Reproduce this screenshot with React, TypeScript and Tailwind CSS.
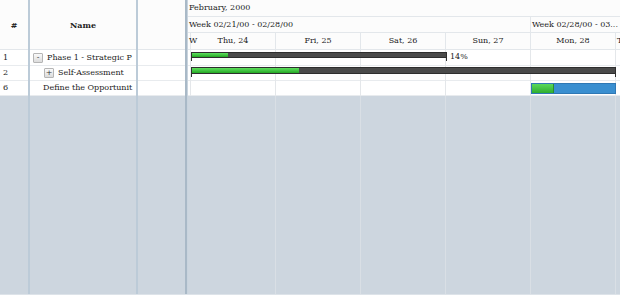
import React from "react";

const F = { fontFamily: '"DejaVu Serif", serif' };

const days = ["Thu, 24", "Fri, 25", "Sat, 26", "Sun, 27", "Mon, 28"];

function DayLines({ white }: { white: boolean }) {
  return (
    <div className="flex h-full">
      <div className={`w-[3px] shrink-0 ${white ? "border-r border-[#e4e7ea]" : ""}`} />
      {days.map((d) => (
        <div key={d} className={`w-[85px] shrink-0 border-r ${white ? "border-[#e4e7ea]" : "border-[#d9dfe5]"}`} />
      ))}
      <div className="flex-1" />
    </div>
  );
}

export default function App() {
  const rows = [
    { n: "1", indent: "pl-[3px]", btn: "-", text: "Phase 1 - Strategic P" },
    { n: "2", indent: "pl-[14px]", btn: "+", text: "Self-Assessment" },
    { n: "6", indent: "pl-[13px]", btn: "", text: "Define the Opportunit" },
  ];
  const rowH = ["h-[16px]", "h-[15px]", "h-[15px]"];
  return (
    <div className="w-[620px] h-[300px] bg-white overflow-hidden text-[8px] text-[#222]" style={F}>
      <div className="h-[295px] flex bg-[#cdd6df] border-b border-[#dde3e9]">
        {/* # column */}
        <div className="w-[30px] shrink-0 flex flex-col border-r-2 border-[#bccbd8]">
          <div className="h-[50px] bg-[#fcfcfc] border-b border-[#e3e7eb] flex items-center justify-center font-bold">#</div>
          {rows.map((r, i) => (
            <div key={i} className={`${rowH[i]} bg-white border-b border-[#e8ebee] flex items-center pl-[3px]`}>{r.n}</div>
          ))}
        </div>
        {/* Name column */}
        <div className="w-[108px] shrink-0 flex flex-col border-r-2 border-[#bccbd8]">
          <div className="h-[50px] bg-[#fcfcfc] border-b border-[#e3e7eb] flex items-center justify-center font-bold">Name</div>
          {rows.map((r, i) => (
            <div key={i} className={`${rowH[i]} bg-white border-b border-[#e8ebee] flex items-center ${r.indent} whitespace-nowrap overflow-hidden`}>
              {r.btn && (
                <span className="w-[10px] h-[10px] mr-[4px] border border-[#b5b5b5] rounded-[1px] bg-gradient-to-b from-[#fafafa] to-[#dcdcdc] flex items-center justify-center text-[8px] leading-none text-[#333]">
                  {r.btn}
                </span>
              )}
              {r.text}
            </div>
          ))}
        </div>
        {/* third column */}
        <div className="w-[47px] shrink-0 flex flex-col">
          <div className="h-[50px] bg-[#fcfcfc] border-b border-[#e3e7eb]" />
          {rows.map((r, i) => (
            <div key={i} className={`${rowH[i]} bg-white border-b border-[#e8ebee]`} />
          ))}
        </div>
        {/* splitter */}
        <div className="w-[3px] shrink-0 bg-[#a9b9c7] border-r border-[#c9d4de]" />
        {/* gantt */}
        <div className="flex-1 flex flex-col overflow-hidden">
          <div className="h-[17px] bg-[#fcfcfc] border-b border-[#e3e7eb] flex items-center pl-[1px] whitespace-nowrap">February, 2000</div>
          <div className="h-[16px] bg-[#fcfcfc] border-b border-[#e3e7eb] flex whitespace-nowrap">
            <div className="w-[343px] shrink-0 border-r border-[#e3e7eb] flex items-center pl-[1px]">Week 02/21/00 - 02/28/00</div>
            <div className="flex-1 flex items-center pl-[1px]">Week 02/28/00 - 03...</div>
          </div>
          <div className="h-[17px] bg-[#fcfcfc] border-b border-[#e3e7eb] flex whitespace-nowrap">
            <div className="w-[3px] shrink-0 border-r border-[#e3e7eb] flex items-center overflow-visible pl-[1px] relative z-10">W</div>
            {days.map((d) => (
              <div key={d} className="w-[85px] shrink-0 border-r border-[#e3e7eb] flex items-center justify-center">{d}</div>
            ))}
            <div className="flex-1 flex items-center pl-[1px] overflow-hidden">T</div>
          </div>
          {/* rows */}
          <div className="h-[46px] bg-white relative">
            <div className="absolute inset-0 flex flex-col">
              <div className="h-[16px] border-b border-[#e8ebee]" />
              <div className="h-[15px] border-b border-[#e8ebee]" />
              <div className="h-[15px] border-b border-[#e8ebee]" />
            </div>
            <div className="absolute inset-0">
              <DayLines white />
            </div>
            {/* bar 1 */}
            <div className="absolute left-[3px] top-[2px] w-[256px] h-[6px] border border-[#2e2e2e] bg-[#4a4a4a] flex overflow-hidden">
              <div className="w-[36px] h-full bg-gradient-to-b from-[#5ee05e] to-[#22a822]" />
            </div>
            <div className="absolute left-[3px] top-[7px] w-[1px] h-[4px] bg-[#2e2e2e]" />
            <div className="absolute left-[258px] top-[7px] w-[1px] h-[4px] bg-[#2e2e2e]" />
            <div className="absolute left-[262px] top-[3px] leading-none">14%</div>
            {/* bar 2 */}
            <div className="absolute left-[3px] top-[17px] w-[425px] h-[7px] border border-[#2e2e2e] bg-[#4a4a4a] flex overflow-hidden">
              <div className="w-[107px] h-full bg-gradient-to-b from-[#5ee05e] to-[#22a822]" />
            </div>
            <div className="absolute left-[3px] top-[23px] w-[1px] h-[4px] bg-[#2e2e2e]" />
            <div className="absolute left-[427px] top-[23px] w-[1px] h-[4px] bg-[#2e2e2e]" />
            {/* bar 3 */}
            <div className="absolute left-[343px] top-[33px] w-[85px] h-[11px] border border-[#2f78b4] bg-[#3a8fd0] flex overflow-hidden">
              <div className="w-[22px] h-full bg-gradient-to-b from-[#5ad85a] to-[#2eae2e] border-r border-[#2a8f2a]" />
            </div>
          </div>
          <div className="flex-1">
            <DayLines white={false} />
          </div>
        </div>
      </div>
    </div>
  );
}
